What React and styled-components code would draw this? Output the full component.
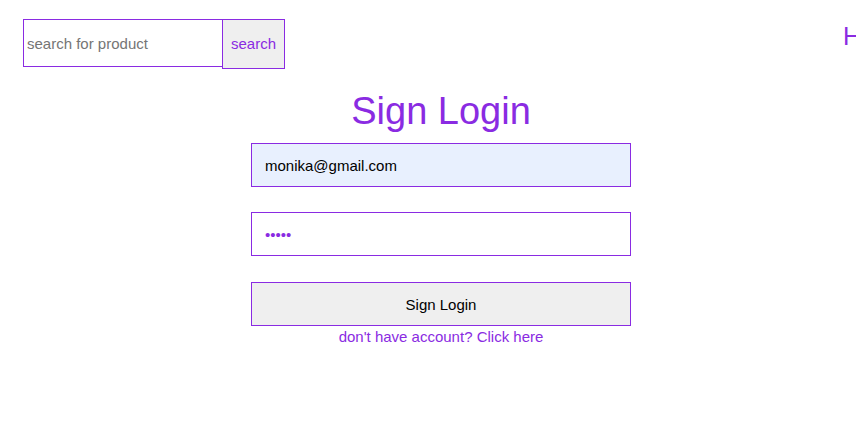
import React, { useState } from "react";
import styled, { createGlobalStyle } from "styled-components";

const purple = "#8a2be2";

const GlobalStyle = createGlobalStyle`
  body {
    margin: 0;
    font-family: "Liberation Sans", Arial, sans-serif;
    background: #fff;
    overflow: hidden;
  }
`;

function App() {
  const [email, setEmail] = useState("monika@gmail.com");
  const [password, setPassword] = useState("12345");

  return (
    <>
      <GlobalStyle />
      <Header>
        <SearchForm onSubmit={(e) => e.preventDefault()}>
          <SearchInput placeholder="search for product" />
          <SearchButton type="submit">search</SearchButton>
        </SearchForm>
        <Nav>
          <NavLink>Home</NavLink>
          <NavLink>Login</NavLink>
          <NavLink>Cart</NavLink>
        </Nav>
      </Header>

      <Main>
        <Title>Sign Login</Title>
        <Form onSubmit={(e) => e.preventDefault()}>
          <Field
            type="email"
            value={email}
            $filled
            onChange={(e) => setEmail(e.target.value)}
          />
          <Field
            type="password"
            value={password}
            onChange={(e) => setPassword(e.target.value)}
          />
          <SubmitButton type="submit">Sign Login</SubmitButton>
        </Form>
        <SignupLink href="#">don't have account? Click here</SignupLink>
      </Main>
    </>
  );
}

const Header = styled.header`
  display: flex;
  align-items: flex-start;
  padding: 19px 0 0 23px;
  width: 100%;
  overflow: hidden;
  box-sizing: border-box;
`;

const SearchForm = styled.form`
  display: flex;
  align-items: flex-start;
  flex-shrink: 0;
`;

const SearchInput = styled.input`
  width: 199px;
  height: 48px;
  box-sizing: border-box;
  border: 1px solid ${purple};
  border-right: none;
  padding: 0 3px;
  font-family: "Liberation Sans", Arial, sans-serif;
  font-size: 15px;
  color: #000;
  outline: none;

  &::placeholder {
    color: #757575;
  }
`;

const SearchButton = styled.button`
  width: 63px;
  height: 50px;
  box-sizing: border-box;
  border: 1px solid ${purple};
  background: #efefef;
  color: ${purple};
  font-family: "Liberation Sans", Arial, sans-serif;
  font-size: 15px;
  padding: 0 0 2px;
  cursor: pointer;
`;

const Nav = styled.nav`
  display: flex;
  gap: 24px;
  flex-shrink: 0;
  margin-left: 558px;
  padding-top: 3px;
`;

const NavLink = styled.a`
  color: ${purple};
  font-size: 25px;
  white-space: nowrap;
  cursor: pointer;
`;

const Main = styled.main`
  display: flex;
  flex-direction: column;
  align-items: center;
  padding-left: 26px;
`;

const Title = styled.h1`
  margin: 21px 0 10px;
  font-size: 38px;
  font-weight: normal;
  color: ${purple};
`;

const Form = styled.form`
  display: flex;
  flex-direction: column;
  gap: 25px;
  width: 380px;
`;

const Field = styled.input`
  height: 44px;
  box-sizing: border-box;
  border: 1px solid ${purple};
  padding: 0 13px;
  font-family: "Liberation Sans", Arial, sans-serif;
  font-size: 15px;
  color: ${(p) => (p.$filled ? "#000" : purple)};
  background: ${(p) => (p.$filled ? "#e8f0fe" : "#fff")};
  outline: none;
`;

const SubmitButton = styled.button`
  height: 44px;
  margin-top: 1px;
  box-sizing: border-box;
  border: 1px solid ${purple};
  background: #efefef;
  color: #000;
  font-family: "Liberation Sans", Arial, sans-serif;
  font-size: 15px;
  cursor: pointer;
`;

const SignupLink = styled.a`
  margin-top: 2px;
  color: ${purple};
  font-size: 15px;
  text-decoration: none;
`;

export default App;
